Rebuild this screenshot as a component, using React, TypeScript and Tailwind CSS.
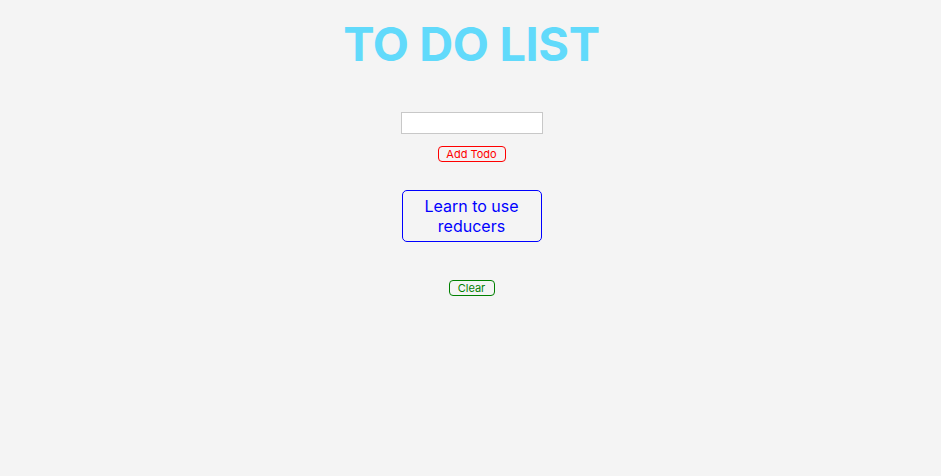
export default function App() {
  return (
    <div className="min-h-[476px] w-full bg-[#f4f4f4] flex flex-col items-center pt-[20px] pl-[2px]" style={{ fontFamily: "Inter, 'Noto Sans', sans-serif" }}>
      <h1 className="text-[47px] leading-[47px] font-bold text-[#61dafb] tracking-[-0.4px]">TO DO LIST</h1>
      <input className="mt-[45px] w-[142px] h-[22px] bg-white border border-[#c8c8c8] outline-none text-[13px] px-1" />
      <button className="mt-[12px] w-[68px] h-[16px] border border-[#ff0000] rounded-[4px] text-[#ff0000] text-[11px] leading-[14px] flex items-center justify-center">Add Todo</button>
      <div className="mt-[28px] w-[140px] h-[52px] border border-[#0000ff] rounded-[5px] text-[#0000ff] text-[16px] leading-[20px] flex items-center justify-center text-center">Learn to use<br />reducers</div>
      <button className="mt-[38px] w-[46px] h-[16px] border border-[#008000] rounded-[4px] text-[#008000] text-[11px] leading-[14px] flex items-center justify-center">Clear</button>
    </div>
  );
}
